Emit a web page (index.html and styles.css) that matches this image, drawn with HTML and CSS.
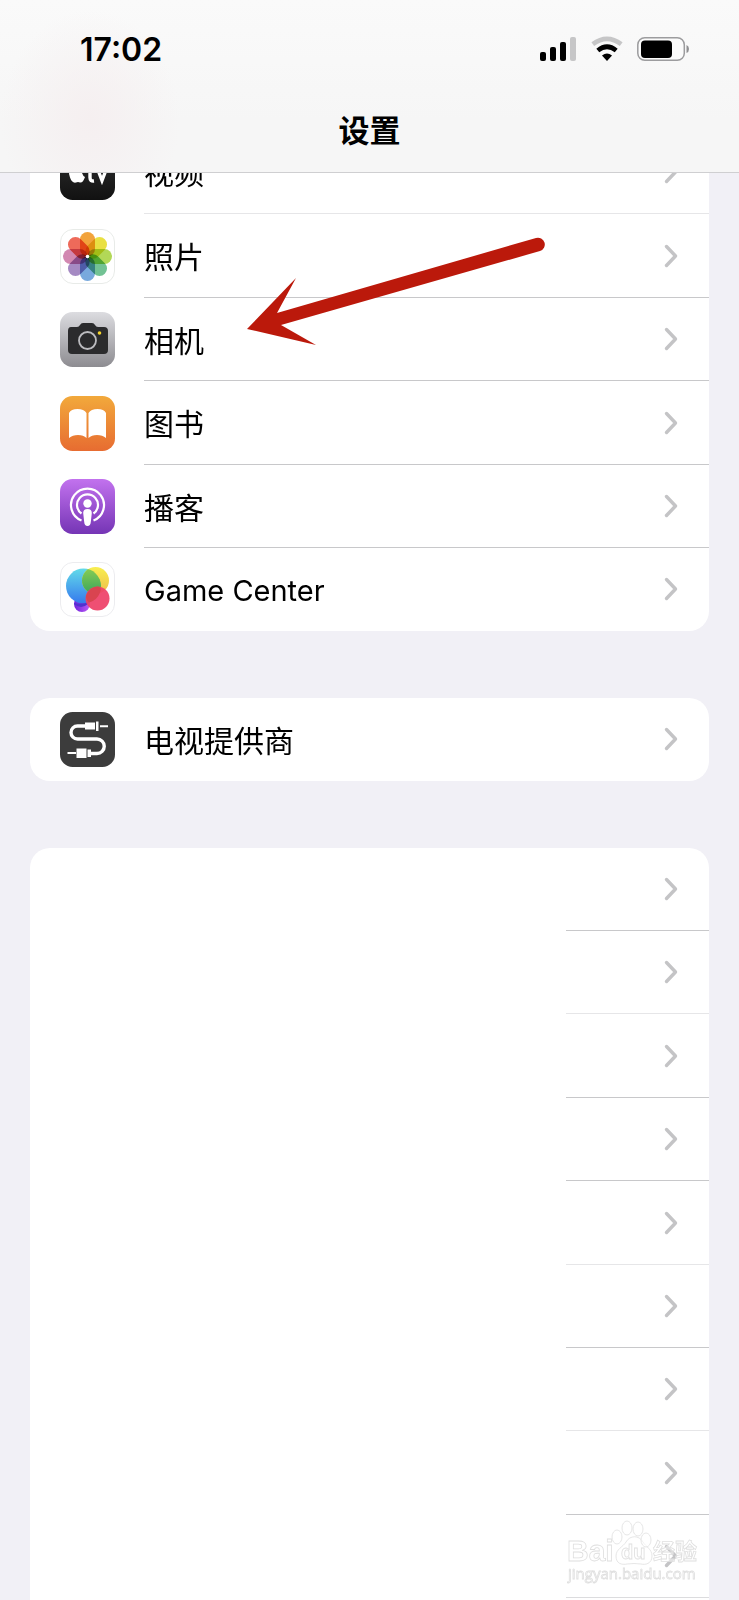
FILE: index.html
```html
<!DOCTYPE html>
<html lang="zh-CN">
<head>
<meta charset="utf-8">
<meta name="viewport" content="width=device-width, initial-scale=1">
<title>设置</title>
<link rel="stylesheet" href="styles.css">
</head>
<body>
<svg class="defs" aria-hidden="true">
  <defs>
    <symbol id="chevron" viewBox="0 0 14 24"><path d="M2.500 2.500 11.500 12 2.500 21.500" fill="none" stroke="#c4c4c6" stroke-width="3.400" stroke-linecap="round" stroke-linejoin="round"/></symbol>
  </defs>
</svg>
<div class="screen">
  <header class="header">
    <div class="status">
      <time class="clock">17:02</time>
      <div class="indicators">
        <svg width="37" height="26" viewBox="0 0 37 26"><rect y="16" width="6" height="9" rx="2"/><rect x="10" y="11" width="6" height="14" rx="2"/><rect x="20" y="6" width="6" height="19" rx="2"/><rect x="30" y="1" width="6" height="24" rx="2" fill="#c6c6c7"/></svg>
        <svg width="32" height="26" viewBox="0 0 32 26"><path d="M1.800 8.200Q16-2.500 30.200 8.200" fill="none" stroke="#c6c6c7" stroke-width="4.600"/><path d="M6.800 14.500Q16 7 25.200 14.500" fill="none" stroke="#000" stroke-width="4.600"/><path d="M11 19.500Q16 15.500 21 19.500L16 25Z"/></svg>
        <svg width="53" height="26" viewBox="0 0 53 26"><rect x=".8" y="1.700" width="46.500" height="22.600" rx="7" fill="#fbfbfb" stroke="#9c9c9e" stroke-width="1.500"/><rect x="4" y="4.500" width="31" height="17.500" rx="4"/><path d="M49.500 9Q52 10 52 13T49.500 17Z" fill="#8f8f91"/></svg>
      </div>
    </div>
    <h1 class="title">设置</h1>
  </header>
  <main class="content">
    <nav class="group group--scrolled">
      <a class="row row--tall" href="#">
        <svg class="icon" viewBox="0 0 55 55"><defs><linearGradient id="tv" x2="0" y2="1"><stop stop-color="#333"/><stop offset="1" stop-color="#111"/></linearGradient></defs><rect width="55" height="55" rx="12.500" fill="url(#tv)"/><path d="M18 20q5-2 6 1-4 3-2 7 1 3 3 4-2 6-5 5.500-2-1-4 0-4 1-6-5-3-8 3-11 2 0 5-1.500Z" fill="#fff"/><path d="M30 19v13.500q0 4 4 3.500M27 25h7M38 25l4 10.500 4-10.500" fill="none" stroke="#fff" stroke-width="3.400"/></svg>
        <span class="cell cell--soft"><span class="label">视频</span><svg class="chevron"><use href="#chevron"/></svg></span>
      </a>
      <a class="row row--tall" href="#">
        <svg class="icon" viewBox="0 0 55 55"><rect x=".5" y=".5" width="54" height="54" rx="12.500" fill="#fff" stroke="#e8ebe8"/>
          <g class="petals"><rect x="20" y="3" width="15" height="24.500" rx="7.500" fill="#f2a33c"/><rect x="20" y="3" width="15" height="24.500" rx="7.500" fill="#e9e043" transform="rotate(45 27.500 27.500)"/><rect x="20" y="3" width="15" height="24.500" rx="7.500" fill="#b2d857" transform="rotate(90 27.500 27.500)"/><rect x="20" y="3" width="15" height="24.500" rx="7.500" fill="#72c294" transform="rotate(135 27.500 27.500)"/><rect x="20" y="3" width="15" height="24.500" rx="7.500" fill="#78a9dd" transform="rotate(180 27.500 27.500)"/><rect x="20" y="3" width="15" height="24.500" rx="7.500" fill="#a58ac3" transform="rotate(225 27.500 27.500)"/><rect x="20" y="3" width="15" height="24.500" rx="7.500" fill="#d288b1" transform="rotate(270 27.500 27.500)"/><rect x="20" y="3" width="15" height="24.500" rx="7.500" fill="#ee6a5a" transform="rotate(315 27.500 27.500)"/></g><circle cx="27.500" cy="27.500" r="1.800" fill="#fff"/></svg>
        <span class="cell"><span class="label">照片</span><svg class="chevron"><use href="#chevron"/></svg></span>
      </a>
      <a class="row" href="#">
        <svg class="icon" viewBox="0 0 55 55"><defs><linearGradient id="cam" x2="0" y2="1"><stop stop-color="#dcdce0"/><stop offset="1" stop-color="#8d8c91"/></linearGradient></defs><rect width="55" height="55" rx="12.500" fill="url(#cam)"/><path d="M11 15h6q2 0 3-2 1-2 3-2h9q2 0 3 2t3 2h6q4 0 4 4v19q0 4-4 4H12q-4 0-4-4V19q0-4 3-4Z" fill="#2b2b2d"/><circle cx="27.500" cy="28.500" r="8.500" fill="none" stroke="#bcbcc0" stroke-width="1.800"/><circle cx="39.500" cy="21" r="1.800" fill="#f4d42c"/></svg>
        <span class="cell"><span class="label">相机</span><svg class="chevron"><use href="#chevron"/></svg></span>
      </a>
      <a class="row row--tall" href="#">
        <svg class="icon" viewBox="0 0 55 55"><defs><linearGradient id="book" x2="0" y2="1"><stop stop-color="#f2a93b"/><stop offset="1" stop-color="#e76c31"/></linearGradient></defs><rect width="55" height="55" rx="12.500" fill="url(#book)"/><path d="M9 17q2-4 8.500-4t9 4v25q-3-3-8.500-3T9 42ZM46 17q-2-4-8.500-4t-9 4v25q3-3 8.500-3t9 3Z" fill="#fff"/></svg>
        <span class="cell"><span class="label">图书</span><svg class="chevron"><use href="#chevron"/></svg></span>
      </a>
      <a class="row" href="#">
        <svg class="icon" viewBox="0 0 55 55"><defs><linearGradient id="pod" x2="0" y2="1"><stop stop-color="#c272ee"/><stop offset="1" stop-color="#7535b5"/></linearGradient></defs><rect width="55" height="55" rx="12.500" fill="url(#pod)"/><g fill="none" stroke="#fff" stroke-width="2.200"><path d="M21.500 41.500a16.500 16.500 0 1 1 12 0"/><path d="M21.500 34.500a10.500 10.500 0 1 1 12 0"/></g><circle cx="27.500" cy="24.500" r="4.200" fill="#fff"/><path d="M23.200 34q0-4 4.300-4t4.300 4l-1 9q-.3 4-3.300 4t-3.300-4Z" fill="#fff"/></svg>
        <span class="cell"><span class="label">播客</span><svg class="chevron"><use href="#chevron"/></svg></span>
      </a>
      <a class="row" href="#">
        <svg class="icon" viewBox="0 0 55 55"><defs><linearGradient id="gb" x2="0" y2="1"><stop stop-color="#62dbe9"/><stop offset="1" stop-color="#3679ee"/></linearGradient><linearGradient id="gy" x2="0" y2="1"><stop stop-color="#f8ef50"/><stop offset="1" stop-color="#edbd4a"/></linearGradient><linearGradient id="gg" x2="0" y2="1"><stop stop-color="#8bce54"/><stop offset="1" stop-color="#3aa65b"/></linearGradient><linearGradient id="gp"><stop stop-color="#6e22dc"/><stop offset="1" stop-color="#c05cf5"/></linearGradient><clipPath id="blueclip"><circle cx="23.500" cy="24" r="17.500"/></clipPath></defs><rect x=".5" y=".5" width="54" height="54" rx="12.500" fill="#fff" stroke="#ececef"/><circle cx="22" cy="42" r="8" fill="url(#gp)"/><circle cx="23.500" cy="24" r="17.500" fill="url(#gb)"/><circle cx="35.500" cy="18.500" r="13.500" fill="url(#gy)"/><circle cx="35.500" cy="18.500" r="13.500" fill="url(#gg)" clip-path="url(#blueclip)"/><path d="M14 41q8 1.500 15-1l-1 2q-7 6-14 0Z" fill="#5132cf"/><circle cx="37.500" cy="36.500" r="12" fill="#ee4268" fill-opacity=".93"/><path d="M26 34q3-9 12-9.500 4 1 2 6-3 8-11 10-3-2-3-6.500Z" fill="#d94450"/></svg>
        <span class="cell"><span class="label label--latin" lang="en">Game Center</span><svg class="chevron"><use href="#chevron"/></svg></span>
      </a>
    </nav>
    <nav class="group">
      <a class="row" href="#">
        <svg class="icon" viewBox="0 0 55 55"><rect width="55" height="55" rx="12.500" fill="#3c3c3c"/><path d="M25 14h-7.500a6.500 6.500 0 0 0 0 13H37a7.200 7.200 0 0 1 0 14.500h-6" fill="none" stroke="#fff" stroke-width="3.400"/><path d="M25 10.500h10v7H25ZM36 9.500h2.500v9.500H36ZM40 13.200h8v2h-8ZM7.500 40h8.500v2H7.500ZM16.500 36.500h10v9.500h-10ZM27.500 37.500h3.500v7.500h-3.500Z" fill="#fff"/></svg>
        <span class="cell"><span class="label">电视提供商</span><svg class="chevron"><use href="#chevron"/></svg></span>
      </a>
    </nav>
    <nav class="group group--apps">
      <a class="row" href="#"><span class="cell"><svg class="chevron"><use href="#chevron"/></svg></span></a>
      <a class="row" href="#"><span class="cell cell--soft"><svg class="chevron"><use href="#chevron"/></svg></span></a>
      <a class="row row--tall" href="#"><span class="cell"><svg class="chevron"><use href="#chevron"/></svg></span></a>
      <a class="row" href="#"><span class="cell"><svg class="chevron"><use href="#chevron"/></svg></span></a>
      <a class="row row--tall" href="#"><span class="cell cell--soft"><svg class="chevron"><use href="#chevron"/></svg></span></a>
      <a class="row" href="#"><span class="cell"><svg class="chevron"><use href="#chevron"/></svg></span></a>
      <a class="row" href="#"><span class="cell cell--soft"><svg class="chevron"><use href="#chevron"/></svg></span></a>
      <a class="row row--tall" href="#"><span class="cell"><svg class="chevron"><use href="#chevron"/></svg></span></a>
      <a class="row" href="#"><span class="cell cell--soft"><svg class="chevron"><use href="#chevron"/></svg></span></a>
    </nav>
  </main>
  <svg class="arrow" viewBox="0 0 299 109" aria-hidden="true"><path d="M0 92 49 41 30 76 289 1A6.700 6.700 0 0 1 293 14L34 88 69 108Z" fill="#bb190b"/></svg>
  <svg class="watermark" viewBox="0 0 136 68">
    <g fill="#fff" fill-opacity=".5" stroke="#dfdfdf" stroke-width=".8">
      <text class="mark" x="0" y="44" font-size="30">Bai</text>
      <path d="M49 39c0-7 7-9 10-14 4-7 13-7 17 0 3 5 9 7 9 14 0 8-7 9-11 8q-7-1-14 0c-5 1-11 0-11-8Z"/>
      <ellipse cx="50" cy="20" rx="5" ry="7"/><ellipse cx="60" cy="11" rx="5" ry="7"/><ellipse cx="71" cy="12" rx="5" ry="7"/><ellipse cx="79" cy="23" rx="5" ry="7"/>
      <text class="mark" x="54" y="42" font-size="20">du</text>
      <text class="mark" x="86" y="42" font-size="22">经验</text>
      <text class="mark mark--url" x="1" y="62" font-size="15">jingyan.baidu.com</text>
    </g>
  </svg>
</div>
</body>
</html>
```

FILE: styles.css
```css
* {
  box-sizing: border-box;
}

body {
  margin: 0;
  background: #f1f0f6;
  color: #000;
  font-family: Inter, "Noto Sans CJK SC", sans-serif;
}

.defs {
  position: absolute;
  width: 0;
  height: 0;
}

.screen {
  position: relative;
  display: flex;
  flex-direction: column;
  min-height: 100vh;
}

.header {
  position: sticky;
  top: 0;
  z-index: 1;
  padding: 28px 49px 20px 80px;
  border-bottom: 1px solid #cfcfd1;
  background:
    radial-gradient(ellipse 90px 110px at 90px 120px, #f5eff0, transparent),
    linear-gradient(#fafafa, #f6f6f6 70%);
}

.status {
  display: flex;
  align-items: center;
  justify-content: space-between;
  height: 42px;
}

.clock {
  font-size: 32px;
  font-weight: 600;
}

.indicators {
  display: flex;
  gap: 14px;
}

.title {
  margin: 40px 0 0;
  padding-right: 31px;
  font-size: 31px;
  font-weight: 600;
  line-height: 42px;
  text-align: center;
}

.content {
  display: flex;
  flex: 1;
  flex-direction: column;
  gap: 67px;
  padding: 0 30px;
}

.group {
  overflow: hidden;
  border-radius: 20px;
  background: #fff;
}

.group--scrolled {
  margin-top: -43px;
}

.group--apps {
  flex: 1;
  border-radius: 20px 20px 0 0;
}

.row {
  display: flex;
  align-items: center;
  gap: 29px;
  height: 83px;
  padding-left: 30px;
  color: inherit;
  text-decoration: none;
}

.row--tall {
  height: 84px;
}

.icon {
  flex: none;
  width: 55px;
  height: 55px;
}

.cell {
  display: flex;
  flex: 1;
  align-items: center;
  align-self: stretch;
  justify-content: space-between;
  padding-right: 31px;
  border-bottom: 1px solid #c8c8ca;
}

.cell--soft {
  border-color: #e6e6e8;
}

.row:last-child .cell {
  border-bottom-color: transparent;
}

.group--apps .row {
  padding-left: 79%;
}

.group--apps .cell {
  justify-content: flex-end;
}

.group--apps .row:last-child .cell {
  border-bottom-color: #dcdcde;
}

.label {
  padding-top: 3px;
  font-size: 30px;
  line-height: 40px;
}

.label--latin {
  font-size: 29px;
}

.chevron {
  width: 14px;
  height: 24px;
}

.petals rect {
  mix-blend-mode: multiply;
}

.arrow {
  position: absolute;
  top: 237px;
  left: 247px;
  width: 299px;
}

.watermark {
  position: absolute;
  right: 36px;
  bottom: 15px;
  width: 136px;
}

.mark {
  font-family: "Liberation Sans", "Noto Sans CJK SC", sans-serif;
  font-weight: 700;
}

.mark--url {
  font-family: "Open Sans", sans-serif;
  font-weight: 400;
}
```
